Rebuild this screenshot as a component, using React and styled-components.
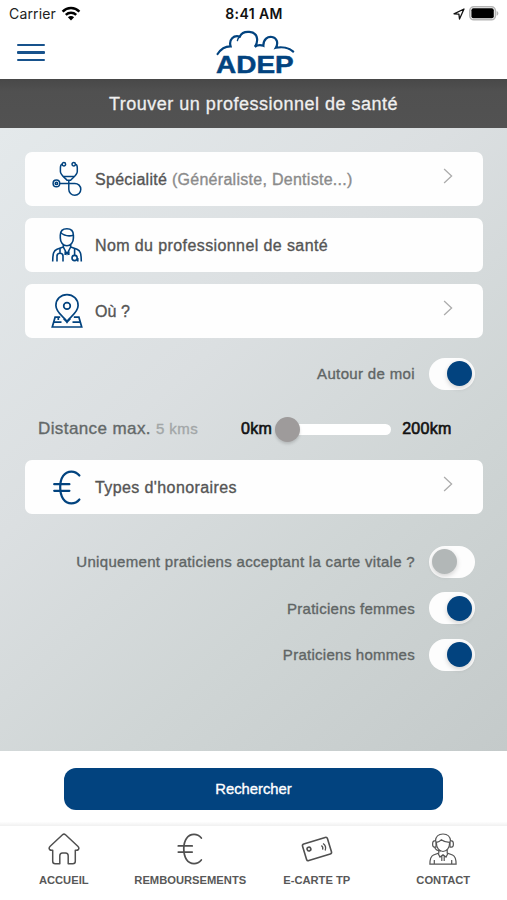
import React, { useState } from "react";
import styled, { createGlobalStyle } from "styled-components";

const BLUE = "#02437f";

const GlobalStyle = createGlobalStyle`
  * {
    box-sizing: border-box;
  }
  body {
    margin: 0;
    background: #fff;
    font-family: "Liberation Sans", Arial, sans-serif;
  }
  button {
    font-family: inherit;
    border: none;
    background: none;
    padding: 0;
  }
`;

const WifiIcon = () => (
  <svg width="20" height="15" viewBox="0 0 20 15" fill="none" stroke="#000" strokeWidth="2.5">
    <path d="M1.6 5.6C6.4 .9 13.6 .9 18.4 5.6" />
    <path d="M4.8 8.9C7.8 6.1 12.2 6.1 15.2 8.9" />
    <path d="M10 14.4L6.9 11.2C8.7 9.7 11.3 9.7 13.1 11.2Z" fill="#000" stroke="none" />
  </svg>
);

const LocationIcon = () => (
  <svg width="12" height="12" viewBox="0 0 12 12" fill="none" stroke="#111" strokeWidth="1.3" strokeLinejoin="round">
    <path d="M11 1L1 5.8L5.9 6.1L6.5 11Z" />
  </svg>
);

const BatteryIcon = () => (
  <svg width="30" height="15" viewBox="0 0 30 15">
    <rect x=".8" y=".8" width="25.6" height="13" rx="4" fill="#fff" stroke="#b5b5b5" strokeWidth="1.6" />
    <rect x="2.4" y="2.3" width="22.4" height="10" rx="2" fill="#000" />
    <path d="M27.7 5V9.8C29.9 8.8 29.9 6 27.7 5Z" fill="#b5b5b5" />
  </svg>
);

const Logo = () => (
  <svg width="82" height="46" viewBox="-1.6 0 82 46" overflow="visible">
    <g fill="none" stroke={BLUE} strokeWidth="2.2" strokeLinecap="round">
      <path d="M3 24C6.5 18.5 11 16.2 16 16.3C14 9.5 19 4.8 25.2 6.6C28.3 -.2 41.6 .2 42.5 8.8C42.8 11.8 42 14.6 40.2 16.8C42.8 15 46 14.8 48.8 15.8C48.6 9.2 53.2 6.2 57.4 7C62.4 8 64 13 61.2 17.8C67.5 16.3 74.5 18 78.6 21.6" />
      <path d="M25.2 6.6C23.6 7.9 22.9 9.2 22.8 10.6" strokeWidth="1.4" />
    </g>
    <text x="1.5" y="43.4" fill={BLUE} stroke={BLUE} strokeWidth=".5" fontSize="24.8" fontWeight="700" textLength="77.5" lengthAdjust="spacingAndGlyphs">
      ADEP
    </text>
  </svg>
);

const StethoscopeIcon = () => (
  <svg width="32" height="36" viewBox="0 0 32 36" fill="none" stroke={BLUE} strokeWidth="1.5">
    <circle cx="12.9" cy="3.2" r="1.7" />
    <circle cx="22.7" cy="3.2" r="1.7" />
    <path d="M11.2 3.2C9.4 3.5 9.4 5 9.4 7V10.5C9.4 13.6 12.5 15.6 16 19.2H19.6C23.2 15.6 26.3 13.6 26.3 10.5V7C26.3 5 26.3 3.5 24.5 3.2" />
    <path d="M12.6 15.6H23.1M17.8 19.2V28.2C17.8 31.6 20.4 34.2 23.8 34.2C27.2 34.2 29.8 31.6 29.8 28.3C29.8 25 27.2 22.4 23.8 22.4H9" />
    <circle cx="5.4" cy="22.4" r="3.3" />
    <circle cx="5.4" cy="22.4" r="1.2" />
  </svg>
);

const DoctorIcon = () => (
  <svg width="32" height="36" viewBox="0 0 32 36" fill="none" stroke={BLUE} strokeWidth="1.6">
    <path d="M9.3 11V8.2C9.3 4 12 1.7 15.9 1.7C19.8 1.7 22.4 4 22.4 8.2V11C22.4 15.2 19.8 18.8 15.9 18.8C12 18.8 9.3 15.2 9.3 11Z" />
    <path d="M9.6 5.5C13 8.7 18 9.4 22.4 8.3" />
    <path d="M12.3 17.5V20L6 22.3C2.8 23.6 1.7 26.4 1.7 34.5M19.7 17.5V20L26 22.3C29.2 23.6 30.3 26.4 30.3 34.5" />
    <path d="M12.3 20L16 27L19.7 20M14.2 24.5V28M17.8 24.5V28M26.8 34.5V31" />
    <path d="M9 21.3V26.3M6 34.5V29C6 25.3 12 25.3 12 29V34.5" />
    <path d="M23.6 21.5V28.2" />
    <circle cx="23.6" cy="31" r="2.6" />
  </svg>
);

const MapPinIcon = () => (
  <svg width="32" height="36" viewBox="0 0 32 36" fill="none" stroke={BLUE} strokeWidth="1.7">
    <path d="M16 28.5C14.7 25 4.9 20.4 4.9 12.6C4.9 6.2 9.8 1.6 16 1.6C22.2 1.6 27.1 6.2 27.1 12.6C27.1 20.4 17.3 25 16 28.5Z" />
    <circle cx="16" cy="12.9" r="3.3" />
    <path d="M9.2 24.2H4.1L1.3 34H30.7L27.9 24.2H22.8" />
    <path d="M2.8 29.2H10.5M21.5 29.2H29.2M12.7 25.6L16 29L19.3 25.6M7.3 25V27" />
  </svg>
);

const EuroIcon = ({ color = BLUE, width = 28, height = 35, stroke = 2.2 }) => (
  <svg width={width} height={height} viewBox="0 0 28 35" fill="none" stroke={color} strokeWidth={stroke} strokeLinecap="round">
    <path d="M26.4 5.5C24.3 3 21.8 1.6 18.4 1.6C11.3 1.6 7.2 8 7.2 17.3C7.2 26.8 11.3 33.4 18.4 33.4C21.8 33.4 24.3 32 26.4 29.5" />
    <path d="M1.2 14.2H16.4M1.2 20.8H16.4" />
  </svg>
);

const ChevronIcon = () => (
  <svg width="10" height="16" viewBox="0 0 10 16" fill="none" stroke="#acacac" strokeWidth="1.3">
    <path d="M1.1 1L8.6 8L1.1 15" />
  </svg>
);

const HomeIcon = () => (
  <svg width="32" height="32" viewBox="0 0 32 32" fill="none" stroke="#505050" strokeWidth="1.5" strokeLinejoin="round">
    <path d="M14.5 1.8Q16 .5 17.5 1.8L29.8 13.2Q31.6 15 30.3 16.6Q29.5 17.4 28 17.2H27.3V28.2Q27.3 30.7 24.8 30.7H20.2V22.8Q20.2 20 17.5 20H14.5Q11.8 20 11.8 22.8V30.7H7.2Q4.7 30.7 4.7 28.2V17.2H4Q2.5 17.4 1.7 16.6Q.4 15 2.2 13.2Z" />
  </svg>
);

const CardIcon = () => (
  <svg width="32" height="32" viewBox="0 0 32 32" fill="none" stroke="#505050" strokeWidth="1.6">
    <g transform="rotate(-17 16 16)">
      <rect x="3" y="7.3" width="26" height="17.4" rx="1.8" />
      <circle cx="8.3" cy="13.7" r="1.9" />
      <path d="M21.2 14Q22.7 16 21.2 18.2M23.4 12.5Q26.2 16 23.4 19.8" strokeWidth="1.3" />
    </g>
  </svg>
);

const SupportIcon = () => (
  <svg width="28" height="32" viewBox="0 0 28 32" fill="none" stroke="#555" strokeWidth="1.2">
    <path d="M6.4 8C6.8 3.3 9.6 1 14 1C18.4 1 21.2 3.3 21.6 8" />
    <path d="M7.3 9C7.3 14.5 10 18.5 14 18.5C18 18.5 20.7 14.5 20.7 9" />
    <path d="M7.5 9.4C10 9 11.2 8 12.2 6.8C14.5 8.6 17.2 9.4 20.5 9.4" />
    <path d="M6.6 7.8H5.4C3 7.8 3 14.2 5.4 14.2H7V7.8M21.4 7.8H22.6C25 7.8 25 14.2 22.6 14.2H21V7.8" />
    <path d="M5.6 14.2C6.4 17 9 18 12 18" />
    <path d="M9.8 17V20L4.5 22C1.5 23.3 .9 26 .9 31.2H27.1C27.1 26 26.5 23.3 23.5 22L18.2 20V17" />
    <path d="M9 20.2L11 24L14 21.8L17 24L19 20.2M12.8 22.5V28M15.2 22.5V28M5.3 31V27M22.7 31V27" />
  </svg>
);

function Row({ icon, label, hint, arrow, spacing }) {
  return (
    <RowCard>
      <RowIcon>{icon}</RowIcon>
      <RowLabel $spacing={spacing}>
        {label}
        {hint && <span> {hint}</span>}
      </RowLabel>
      {arrow && (
        <RowArrow>
          <ChevronIcon />
        </RowArrow>
      )}
    </RowCard>
  );
}

function Toggle({ label, initial, spacing }) {
  const [on, setOn] = useState(initial);

  return (
    <ToggleRow>
      <ToggleLabel $spacing={spacing}>{label}</ToggleLabel>
      <Switch role="switch" aria-checked={on} onClick={() => setOn(!on)} $on={on}>
        <Knob $on={on} />
      </Switch>
    </ToggleRow>
  );
}

function App() {
  return (
    <Screen>
      <GlobalStyle />
      <StatusBar>
        <Carrier>
          Carrier <WifiIcon />
        </Carrier>
        <Clock>8:41 AM</Clock>
        <StatusIcons>
          <LocationIcon />
          <BatteryIcon />
        </StatusIcons>
      </StatusBar>
      <Header>
        <MenuButton>
          <i />
          <i />
          <i />
        </MenuButton>
        <Logo />
      </Header>
      <TitleBar>Trouver un professionnel de santé</TitleBar>

      <Content>
        <Rows>
          <Row icon={<StethoscopeIcon />} label="Spécialité" hint="(Généraliste, Dentiste...)" arrow spacing={0.28} />
          <Row icon={<DoctorIcon />} label="Nom du professionnel de santé" spacing={0.4} />
          <Row icon={<MapPinIcon />} label="Où ?" arrow spacing={0.1} />
        </Rows>
        <AroundMe>
          <Toggle label="Autour de moi" initial={true} spacing={0.35} />
        </AroundMe>
        <Distance>
          <DistanceLabel>
            Distance max. <small>5 kms</small>
          </DistanceLabel>
          <Bound>0km</Bound>
          <Track>
            <Thumb />
          </Track>
          <Bound>200km</Bound>
        </Distance>
        <Row icon={<EuroIcon />} label="Types d'honoraires" arrow spacing={0.4} />
        <Filters>
          <Toggle label="Uniquement praticiens acceptant la carte vitale ?" initial={false} spacing={0.31} />
          <Toggle label="Praticiens femmes" initial={true} spacing={0.27} />
          <Toggle label="Praticiens hommes" initial={true} spacing={0.27} />
        </Filters>
      </Content>

      <Actions>
        <SearchButton>Rechercher</SearchButton>
      </Actions>
      <TabBar>
        <Tab>
          <HomeIcon />
          <span>ACCUEIL</span>
        </Tab>
        <Tab>
          <EuroIcon color="#505050" width={26} height={32} stroke={1.9} />
          <span>REMBOURSEMENTS</span>
        </Tab>
        <Tab>
          <CardIcon />
          <span>E-CARTE TP</span>
        </Tab>
        <Tab>
          <SupportIcon />
          <span>CONTACT</span>
        </Tab>
      </TabBar>
    </Screen>
  );
}

const Screen = styled.div`
  width: 507px;
  height: 900px;
  display: flex;
  flex-direction: column;
  overflow: hidden;
  background: #fff;
`;

const StatusBar = styled.div`
  display: grid;
  grid-template-columns: 1fr auto 1fr;
  align-items: center;
  height: 27px;
  padding: 0 8px 0 9px;
  font-family: Inter, "Liberation Sans", sans-serif;
  font-size: 14px;
  color: #222;
`;

const Carrier = styled.div`
  display: flex;
  align-items: center;
  gap: 5px;
  letter-spacing: 0.15px;
`;

const Clock = styled.div`
  font-weight: 600;
  letter-spacing: 0.4px;
  color: #111;
`;

const StatusIcons = styled.div`
  display: flex;
  align-items: center;
  justify-content: flex-end;
  gap: 4px;
`;

const Header = styled.header`
  display: grid;
  grid-template-columns: 1fr auto 1fr;
  height: 52px;
  padding: 3px 17px 0;
`;

const MenuButton = styled.button`
  display: flex;
  flex-direction: column;
  gap: 5px;
  width: 28px;
  margin-top: 14px;

  i {
    width: 28px;
    height: 2.3px;
    border-radius: 1px;
    background: #17528c;
  }
`;

const TitleBar = styled.h1`
  display: flex;
  align-items: center;
  justify-content: center;
  height: 49px;
  margin: 0;
  padding-top: 1px;
  background: linear-gradient(#484848, #505050 25%, #525252);
  color: #efefef;
  font-size: 18px;
  font-weight: 400;
  letter-spacing: 0.5px;
  -webkit-text-stroke: 0.3px;
`;

const Content = styled.main`
  height: 623px;
  padding: 24px 24px 0 25px;
  background: linear-gradient(138deg, #e4e9eb 0%, #dbdfe1 38%, #cfd5d5 68%, #c4caca 100%);
`;

const Rows = styled.div`
  display: flex;
  flex-direction: column;
  gap: 12px;
`;

const RowCard = styled.div`
  display: flex;
  align-items: center;
  height: 54px;
  padding: 0 30px 0 24px;
  border-radius: 7px;
  background: #fefefe;
`;

const RowIcon = styled.div`
  display: flex;
  justify-content: center;
  width: 35px;
  margin-right: 11px;
`;

const RowLabel = styled.div`
  flex: 1;
  padding-top: 2px;
  color: #555;
  font-size: 16px;
  letter-spacing: ${(props) => props.$spacing}px;
  -webkit-text-stroke: 0.35px;
  white-space: nowrap;

  span {
    color: #8b8b8b;
  }
`;

const RowArrow = styled.div`
  display: flex;
  padding-bottom: 7px;
`;

const ToggleRow = styled.label`
  display: flex;
  align-items: center;
  justify-content: flex-end;
  gap: 14px;
  height: 33px;
  padding-right: 8px;
`;

const ToggleLabel = styled.span`
  color: #606565;
  font-size: 15px;
  letter-spacing: ${(props) => props.$spacing}px;
  -webkit-text-stroke: 0.35px;
`;

const Switch = styled.button`
  display: flex;
  align-items: center;
  justify-content: ${(props) => (props.$on ? "flex-end" : "flex-start")};
  width: 46px;
  height: 32px;
  padding: 0 3px;
  border-radius: 16px;
  background: #fdfdfd;
`;

const Knob = styled.span`
  width: 25px;
  height: 25px;
  border-radius: 50%;
  background: ${(props) => (props.$on ? BLUE : "#b2b7b7")};
  box-shadow: 0 2px 5px rgba(0, 0, 0, 0.18);
`;

const AroundMe = styled.div`
  padding-top: 19px;
`;

const Distance = styled.div`
  display: flex;
  align-items: center;
  height: 70px;
  padding: 8px 0 0 13px;
`;

const DistanceLabel = styled.div`
  width: 203px;
  color: #636868;
  font-size: 17px;
  letter-spacing: 0.4px;
  -webkit-text-stroke: 0.35px;

  small {
    color: #a2a6a7;
    font-size: 15px;
  }
`;

const Bound = styled.div`
  color: #111;
  font-size: 16px;
  letter-spacing: 0.3px;
  -webkit-text-stroke: 0.6px;
`;

const Track = styled.div`
  display: flex;
  align-items: center;
  width: 103px;
  height: 11px;
  margin: 0 11px 0 16px;
  border-radius: 0 6px 6px 0;
  background: #fff;
`;

const Thumb = styled.div`
  flex: none;
  width: 25px;
  height: 25px;
  margin-left: -13px;
  border-radius: 50%;
  background: #9e9b9b;
  box-shadow: 0 2px 3px rgba(0, 0, 0, 0.15);
`;

const Filters = styled.div`
  display: flex;
  flex-direction: column;
  gap: 13.5px;
  padding-top: 31px;
`;

const Actions = styled.div`
  display: flex;
  justify-content: center;
  height: 75px;
  padding-top: 17px;
  background: linear-gradient(#fff 94%, #f0f0f0);
`;

const SearchButton = styled.button`
  width: 379px;
  height: 41.5px;
  padding-top: 1px;
  border-radius: 12px;
  background: ${BLUE};
  color: #fff;
  font-size: 14.8px;
  -webkit-text-stroke: 0.35px;
`;

const TabBar = styled.nav`
  display: grid;
  grid-template-columns: repeat(4, 126.5px);
  height: 74px;
  padding: 7px 0 0 0.5px;
`;

const Tab = styled.div`
  display: flex;
  flex-direction: column;
  align-items: center;
  gap: 9px;

  span {
    color: #585858;
    font-size: 11.2px;
    font-weight: 700;
    line-height: 13px;
  }
`;

export default App;
